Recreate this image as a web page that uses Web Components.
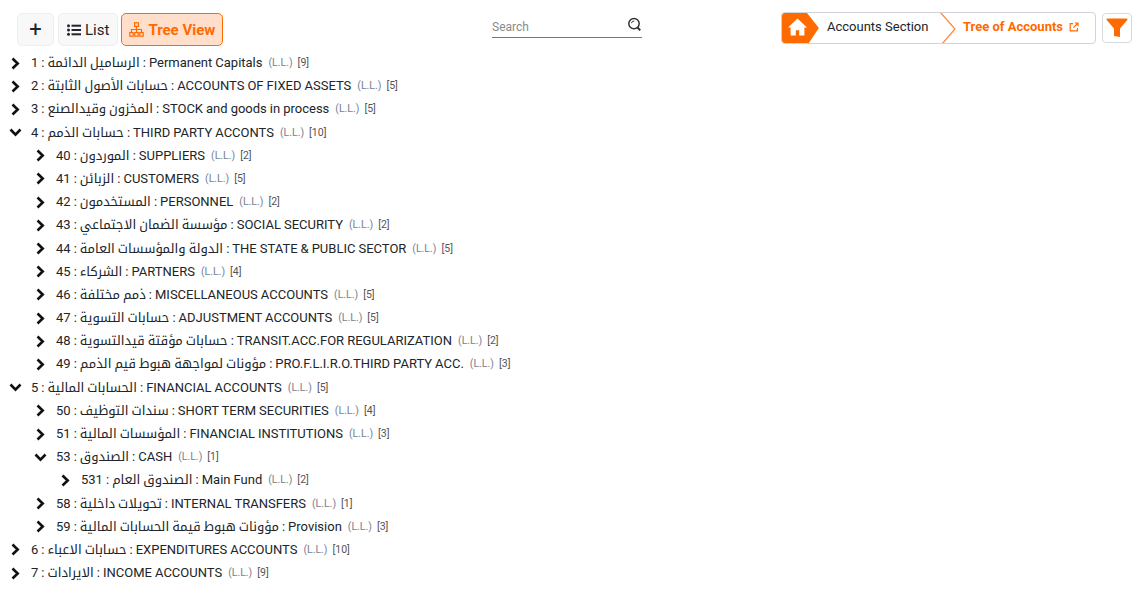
<!DOCTYPE html>
<html>
<head>
<meta charset="utf-8">
<title>Tree of Accounts</title>
<style>
    html, body { margin: 0; background: #fff; }
    body { font-family: Roboto, "Noto Kufi Arabic", sans-serif; color: #212529; }
</style>
</head>
<body>
<accounts-page>
    <tool-bar slot="bar">
        <tool-button slot="left" square><span style="font-size:22px;font-weight:400;line-height:1">+</span></tool-button>
        <tool-button slot="left">
            <svg width="14" height="12" viewBox="0 0 14 12" fill="#212529"><circle cx="1.5" cy="1.7" r="1.5"/><circle cx="1.5" cy="6" r="1.5"/><circle cx="1.5" cy="10.3" r="1.5"/><rect x="4.5" y=".7" width="9.5" height="2"/><rect x="4.5" y="5" width="9.5" height="2"/><rect x="4.5" y="9.3" width="9.5" height="2"/></svg>
            List
        </tool-button>
        <tool-button slot="left" active>
            <svg width="15" height="15" viewBox="0 0 15 15" fill="none" stroke="#ff6a00" stroke-width="1.2"><rect x="5.6" y=".8" width="3.8" height="3.6"/><rect x=".8" y="10.6" width="3.4" height="3.6"/><rect x="5.8" y="10.6" width="3.4" height="3.6"/><rect x="10.8" y="10.6" width="3.4" height="3.6"/><path d="M7.5 4.4v6.2M2.5 10.6V7.5h10v3.1"/></svg>
            Tree View
        </tool-button>
        <search-box slot="middle"></search-box>
        <bread-crumb slot="right"></bread-crumb>
        <filter-button slot="right"></filter-button>
    </tool-bar>
    <tree-node label="1 : الرساميل الدائمة : Permanent Capitals" count="9"></tree-node>
    <tree-node label="2 : حسابات الأصول الثابتة : ACCOUNTS OF FIXED ASSETS" count="5"></tree-node>
    <tree-node label="3 : المخزون وقيدالصنع : STOCK and goods in process" count="5"></tree-node>
    <tree-node label="4 : حسابات الذمم : THIRD PARTY ACCONTS" count="10" open>
        <tree-node label="40 : الموردون : SUPPLIERS" count="2"></tree-node>
        <tree-node label="41 : الزبائن : CUSTOMERS" count="5"></tree-node>
        <tree-node label="42 : المستخدمون : PERSONNEL" count="2"></tree-node>
        <tree-node label="43 : مؤسسة الضمان الاجتماعي : SOCIAL SECURITY" count="2"></tree-node>
        <tree-node label="44 : الدولة والمؤسسات العامة : THE STATE &amp; PUBLIC SECTOR" count="5"></tree-node>
        <tree-node label="45 : الشركاء : PARTNERS" count="4"></tree-node>
        <tree-node label="46 : ذمم مختلفة : MISCELLANEOUS ACCOUNTS" count="5"></tree-node>
        <tree-node label="47 : حسابات التسوية : ADJUSTMENT ACCOUNTS" count="5"></tree-node>
        <tree-node label="48 : حسابات مؤقتة قيدالتسوية : TRANSIT.ACC.FOR REGULARIZATION" count="2"></tree-node>
        <tree-node label="49 : مؤونات لمواجهة هبوط قيم الذمم : PRO.F.L.I.R.O.THIRD PARTY ACC." count="3"></tree-node>
    </tree-node>
    <tree-node label="5 : الحسابات المالية : FINANCIAL ACCOUNTS" count="5" open>
        <tree-node label="50 : سندات التوظيف : SHORT TERM SECURITIES" count="4"></tree-node>
        <tree-node label="51 : المؤسسات المالية : FINANCIAL INSTITUTIONS" count="3"></tree-node>
        <tree-node label="53 : الصندوق : CASH" count="1" open>
            <tree-node label="531 : الصندوق العام : Main Fund" count="2"></tree-node>
        </tree-node>
        <tree-node label="58 : تحويلات داخلية : INTERNAL TRANSFERS" count="1"></tree-node>
        <tree-node label="59 : مؤونات هبوط قيمة الحسابات المالية : Provision" count="3"></tree-node>
    </tree-node>
    <tree-node label="6 : حسابات الاعباء : EXPENDITURES ACCOUNTS" count="10"></tree-node>
    <tree-node label="7 : الايرادات : INCOME ACCOUNTS" count="9"></tree-node>
</accounts-page>

<script>
class AccountsPage extends HTMLElement {
    constructor() {
        super();
        this.attachShadow({mode: 'open'});
        this.shadowRoot.innerHTML = `
            <style>
                :host { display: block; }
                .tree { padding: 5.45px 0 0 6px; }
            </style>
            <slot name="bar"></slot>
            <div class="tree"><slot></slot></div>
        `;
    }
}
customElements.define("accounts-page", AccountsPage);

class ToolBar extends HTMLElement {
    constructor() {
        super();
        this.attachShadow({mode: 'open'});
        this.shadowRoot.innerHTML = `
            <style>
                :host { display: block; padding: 12px 12px 0 17px; }
                .bar { display: grid; grid-template-columns: 475px 150px 1fr; height: 34px; }
                .left { display: flex; gap: 4px; padding-top: 1px; }
                .middle { display: flex; }
                .right { display: flex; justify-content: flex-end; gap: 6px; }
            </style>
            <div class="bar">
                <div class="left"><slot name="left"></slot></div>
                <div class="middle"><slot name="middle"></slot></div>
                <div class="right"><slot name="right"></slot></div>
            </div>
        `;
    }
}
customElements.define("tool-bar", ToolBar);

class ToolButton extends HTMLElement {
    constructor() {
        super();
        this.attachShadow({mode: 'open'});
        this.shadowRoot.innerHTML = `
            <style>
                :host {
                    display: flex; align-items: center; justify-content: center; gap: 4px;
                    box-sizing: border-box; height: 33px; padding: 0 8px;
                    background: #f8f8f8; border: 1px solid #eeeeee; border-radius: 5px;
                    font-size: 15px; color: #212529; cursor: pointer;
                }
                :host([square]) { width: 37px; padding: 0; }
                :host([active]) {
                    background: #ffdfcc; border-color: #ff6a00; color: #ff6a00;
                    font-weight: 700; padding: 0 7px 0 7px; margin-left: -1px;
                }
            </style>
            <slot></slot>
        `;
    }
}
customElements.define("tool-button", ToolButton);

class SearchBox extends HTMLElement {
    constructor() {
        super();
        this.attachShadow({mode: 'open'});
        this.shadowRoot.innerHTML = `
            <style>
                :host {
                    display: flex; align-items: center; justify-content: space-between;
                    box-sizing: border-box; width: 150px; height: 26px; padding: 5px 0 0 0;
                    border-bottom: 1px solid #777;
                    font-size: 12px; color: #8a8a8a;
                }
                svg { margin-top: -5px; }
            </style>
            <span>Search</span>
            <svg width="15" height="15" viewBox="0 0 15 15" fill="none" stroke="#333" stroke-width="1.5">
                <circle cx="7" cy="6.6" r="5.2"/>
                <path d="M10.6 10.5l2.6 2.9" stroke-width="2"/>
                <path d="M4.4 6.2a2.8 2.8 0 0 1 2.8-2.2" stroke-width="1"/>
            </svg>
        `;
    }
}
customElements.define("search-box", SearchBox);

class BreadCrumb extends HTMLElement {
    constructor() {
        super();
        this.attachShadow({mode: 'open'});
        this.shadowRoot.innerHTML = `
            <style>
                :host {
                    display: flex; align-items: center; position: relative; overflow: hidden;
                    box-sizing: border-box; width: 315px; height: 32px;
                    border: 1px solid #ced4da; border-radius: 4px;
                    font-size: 13px; color: #212529; line-height: 16px;
                }
                .home { display: block; flex: none; margin: -1px 0 -1px -1px; }
                .section { margin-left: 7px; width: 112px; flex: none; padding-bottom: 3px; }
                .sep { display: block; flex: none; }
                .current {
                    display: flex; align-items: center; gap: 6px; margin-left: 6px; padding-bottom: 3px;
                    font-weight: 700; color: #ff6a00;
                }
            </style>
            <svg class="home" width="39" height="32" viewBox="0 0 39 32">
                <path d="M4 0H26L39 16 28 32H4Q0 32 0 28V4Q0 0 4 0Z" fill="#ff6a00" transform="scale(.97 1)"/>
                <path d="M16.5 6.5L7 15.5h2.6v8h5.2v-5.2h3.4v5.2h5.2v-8H26Z" fill="#fff"/>
            </svg>
            <span class="section">Accounts Section</span>
            <svg class="sep" width="18" height="30" viewBox="0 0 18 30" fill="none" stroke="#ff8a3d" stroke-width="1.3"><path d="M1 -1L16 16 3 31"/></svg>
            <span class="current">Tree of Accounts
                <svg width="10" height="10" viewBox="0 0 10 10" fill="none" stroke="#ff6a00" stroke-width="1.2"><path d="M4 1.6H1.2v7.2h7.2V6M5.8 1h3.2v3.2M9 1L4.4 5.6"/></svg>
            </span>
        `;
    }
}
customElements.define("bread-crumb", BreadCrumb);

class FilterButton extends HTMLElement {
    constructor() {
        super();
        this.attachShadow({mode: 'open'});
        this.shadowRoot.innerHTML = `
            <style>
                :host {
                    display: flex; align-items: center; justify-content: center;
                    box-sizing: border-box; width: 30px; height: 30px; margin-top: 1px;
                    background: #fff; border: 1px solid #d5d8dc; border-radius: 4px;
                }
            </style>
            <svg width="22" height="20" viewBox="0 0 22 20"><path d="M1.5 0.5h19a1 1 0 0 1 .8 1.6L14 10.5V19l-6-1V10.5L.7 2.1A1 1 0 0 1 1.5.5Z" fill="#ff6a00"/></svg>
        `;
    }
}
customElements.define("filter-button", FilterButton);

class TreeNode extends HTMLElement {
    constructor() {
        super();
        this.attachShadow({mode: 'open'});
        this.shadowRoot.innerHTML = `
            <style>
                :host { display: block; font-size: 13px; color: #212529; }
                .row { display: flex; align-items: center; height: 23.2px; line-height: 16px; white-space: nowrap; cursor: pointer; }
                .arrow { flex: none; width: 25px; display: flex; padding-left: 4px; box-sizing: border-box; }
                .label { word-spacing: -0.2px; }
                .unit { margin-left: 6px; font-size: 10.5px; color: #78828f; }
                .count { margin-left: 5px; font-size: 10.5px; color: #555; }
                .kids { padding-left: 25px; display: none; }
                :host([open]) .kids { display: block; }
                :host([open]) svg { transform: rotate(90deg); }
            </style>
            <div class="row">
                <span class="arrow"><svg width="11" height="13" viewBox="0 0 11 13" fill="none" stroke="#111" stroke-width="2.6"><path d="M2.5 1.5l5.2 5-5.2 5"/></svg></span>
                <span class="label"></span>
                <span class="unit">(L.L.)</span>
                <span class="count"></span>
            </div>
            <div class="kids"><slot></slot></div>
        `;
        this.shadowRoot.querySelector(".row").addEventListener("click", () => this.toggleAttribute("open"));
    }
    connectedCallback() {
        this.shadowRoot.querySelector(".label").textContent = this.getAttribute("label");
        this.shadowRoot.querySelector(".count").textContent = `[${this.getAttribute("count")}]`;
    }
}
customElements.define("tree-node", TreeNode);
</script>
</body>
</html>
